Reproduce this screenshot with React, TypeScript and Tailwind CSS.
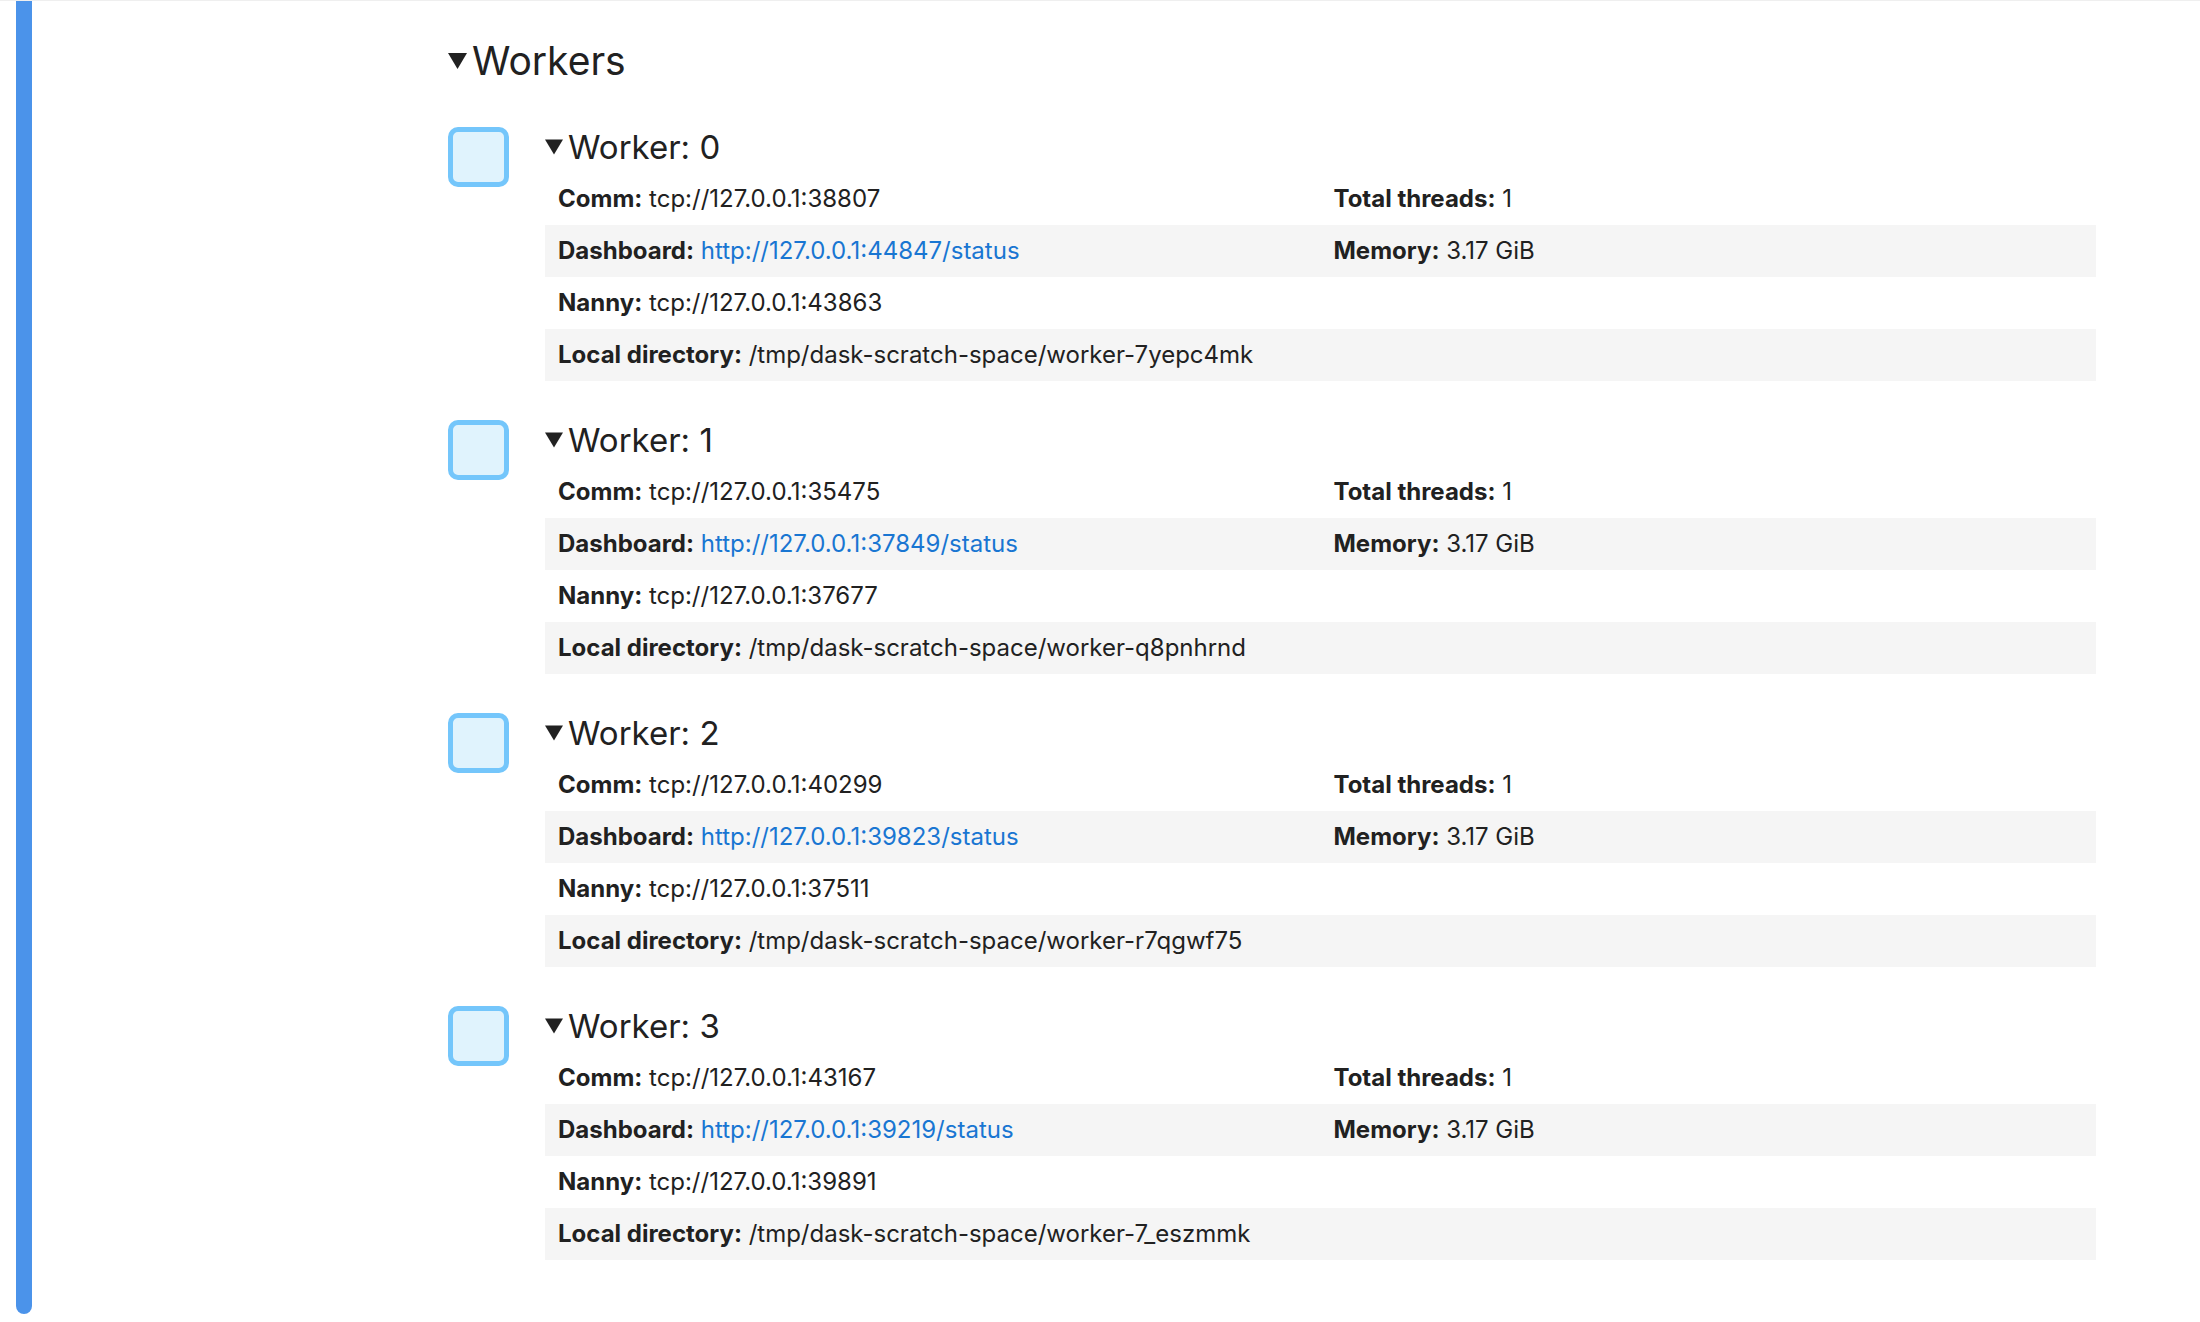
import React from 'react';

type Worker = {
  id: number;
  comm: string;
  dashboard: string;
  nanny: string;
  dir: string;
};

const workers: Worker[] = [
  { id: 0, comm: 'tcp://127.0.0.1:38807', dashboard: 'http://127.0.0.1:44847/status', nanny: 'tcp://127.0.0.1:43863', dir: '/tmp/dask-scratch-space/worker-7yepc4mk' },
  { id: 1, comm: 'tcp://127.0.0.1:35475', dashboard: 'http://127.0.0.1:37849/status', nanny: 'tcp://127.0.0.1:37677', dir: '/tmp/dask-scratch-space/worker-q8pnhrnd' },
  { id: 2, comm: 'tcp://127.0.0.1:40299', dashboard: 'http://127.0.0.1:39823/status', nanny: 'tcp://127.0.0.1:37511', dir: '/tmp/dask-scratch-space/worker-r7qgwf75' },
  { id: 3, comm: 'tcp://127.0.0.1:43167', dashboard: 'http://127.0.0.1:39219/status', nanny: 'tcp://127.0.0.1:39891', dir: '/tmp/dask-scratch-space/worker-7_eszmmk' },
];

const Caret = ({ className }: { className: string }) => (
  <svg viewBox="0 0 19 16" className={className} fill="#212121">
    <polygon points="0,0 19,0 9.5,16" />
  </svg>
);

const Cell = ({ label, children }: { label: string; children?: React.ReactNode }) => (
  <td className="w-1/2 px-[13px] py-[12px] align-top">
    {label && (
      <>
        <strong className="font-bold">{label}</strong> {children}
      </>
    )}
  </td>
);

const WorkerBlock = ({ w }: { w: Worker }) => (
  <div className="flex gap-[36px] mb-[39px]">
    {/* worker icon */}
    <div className="w-[61px] h-[60px] shrink-0 rounded-[10px] border-[5px] border-[#74c6fb] bg-[#e0f3fd]" />

    <div className="flex-1 flex flex-col">
      <div className="flex items-center gap-[5px] h-[40px] text-[33px] leading-[40px] text-[#212121]">
        <Caret className="w-[18px] h-[16px] shrink-0" />
        <span>Worker: {w.id}</span>
      </div>

      <table className="mt-[6px] w-full table-fixed border-collapse text-[24px] leading-[28px] text-[#212121]">
        <tbody>
          <tr className="h-[52px]">
            <Cell label="Comm:">{w.comm}</Cell>
            <Cell label="Total threads:">1</Cell>
          </tr>
          <tr className="h-[52px] bg-[#f5f5f5]">
            <Cell label="Dashboard:">
              <a className="text-[#1976d2]">{w.dashboard}</a>
            </Cell>
            <Cell label="Memory:">3.17 GiB</Cell>
          </tr>
          <tr className="h-[52px]">
            <Cell label="Nanny:">{w.nanny}</Cell>
            <Cell label="" />
          </tr>
          <tr className="h-[52px] bg-[#f5f5f5]">
            <td colSpan={2} className="px-[13px] py-[12px]">
              <strong className="font-bold">Local directory:</strong> {w.dir}
            </td>
          </tr>
        </tbody>
      </table>
    </div>
  </div>
);

export default function App() {
  return (
    <div
      className="w-[2200px] h-[1322px] bg-white overflow-hidden border-t border-[#efefef] flex"
      style={{ fontFamily: 'Inter, "Liberation Sans", sans-serif' }}
    >
      {/* active cell collapser */}
      <div className="pl-[16px] pb-[8px] flex">
        <div className="w-[16px] h-full bg-[#4b93ea] rounded-b-[8px]" />
      </div>

      <div className="flex-1 flex flex-col pl-[416px] pr-[104px]">
        <div className="mt-[36px] flex items-center gap-[5px] h-[48px] text-[39px] leading-[48px] text-[#212121]">
          <Caret className="w-[19px] h-[16px] shrink-0" />
          <span>Workers</span>
        </div>

        <div className="mt-[42px] flex flex-col">
          {workers.map((w) => (
            <WorkerBlock key={w.id} w={w} />
          ))}
        </div>
      </div>
    </div>
  );
}
